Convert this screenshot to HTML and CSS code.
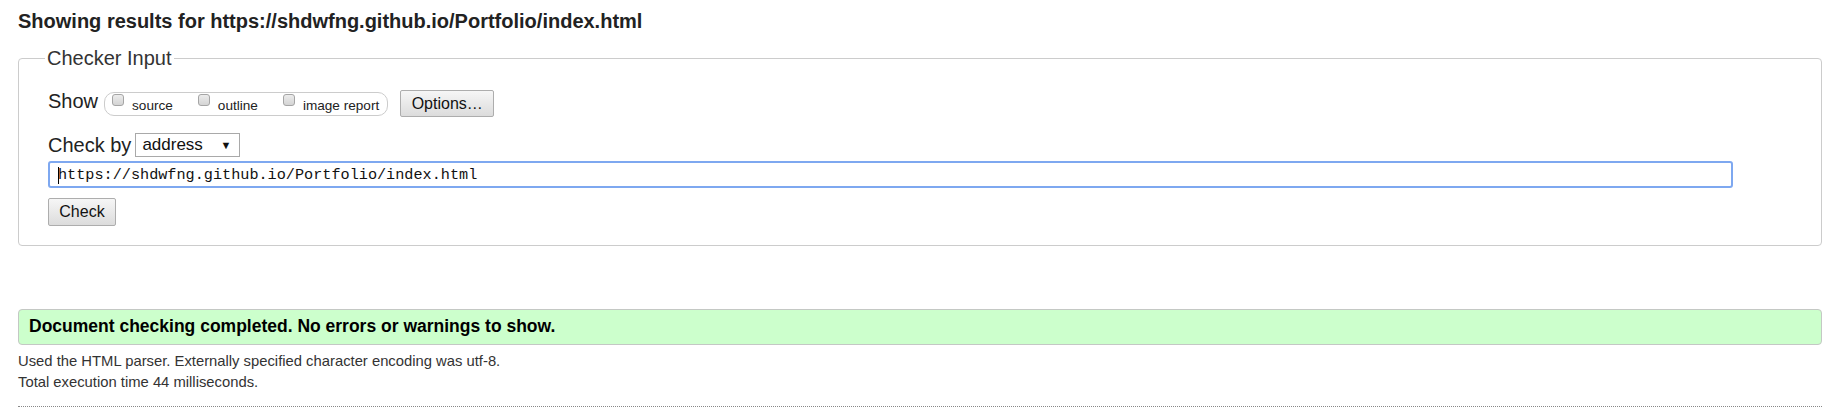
FILE: index.html
```html
<!DOCTYPE html>
<html lang="en">
<head>
<meta charset="utf-8">
<title>Showing results for https://shdwfng.github.io/Portfolio/index.html</title>
<link rel="stylesheet" href="styles.css">
</head>
<body>
<div class="page">
  <h2 class="title">Showing results for https://shdwfng.github.io/Portfolio/index.html</h2>
  <form class="checker">
    <fieldset class="panel">
      <legend class="panel-legend">Checker Input</legend>
      <div class="row row-show">
        <span class="label">Show</span>
        <fieldset class="pill">
          <label class="opt"><input type="checkbox" class="cb"><span class="opt-text">source</span></label>
          <label class="opt"><input type="checkbox" class="cb"><span class="opt-text">outline</span></label>
          <label class="opt"><input type="checkbox" class="cb"><span class="opt-text">image report</span></label>
        </fieldset>
        <button type="button" class="btn btn-options">Options…</button>
      </div>
      <div class="row row-by">
        <span class="label">Check by</span>
        <div class="select"><span class="select-text">address</span><span class="select-arrow">▼</span></div>
      </div>
      <div class="url"><span class="caret"></span>https://shdwfng.github.io/Portfolio/index.html</div>
      <div class="row row-check">
        <button type="button" class="btn btn-check">Check</button>
      </div>
    </fieldset>
  </form>
  <div class="success">Document checking completed. No errors or warnings to show.</div>
  <p class="info">Used the HTML parser. Externally specified character encoding was utf-8.</p>
  <p class="info">Total execution time 44 milliseconds.</p>
  <hr class="rule">
</div>
</body>
</html>
```
FILE: styles.css
```css
html, body {
  margin: 0;
  padding: 0;
  background: #fff;
}
.page {
  padding: 0 21px 0 18px;
  font-family: "Liberation Sans", Arial, sans-serif;
  color: #222;
}
.title {
  margin: 10px 0 0 0;
  font-size: 20px;
  line-height: 23px;
  font-weight: bold;
  color: #222;
}
.checker {
  margin: 14px 0 0 0;
}
.panel {
  margin: 0;
  border: 1px solid #cccccc;
  border-radius: 4px;
  padding: 20px 10px 19px 29px;
  min-width: 0;
}
.panel-legend {
  margin-left: -3px;
  padding: 0 2px;
  font-size: 20px;
  line-height: 23px;
  color: #333;
}
.row {
  display: flex;
  align-items: center;
}
.row-show {
  height: 27px;
}
.label {
  font-size: 20px;
  line-height: 23px;
  color: #222;
}
.row-show .label {
  margin-right: 6px;
  margin-top: -4px;
}
.pill {
  margin: 0;
  display: flex;
  align-items: flex-start;
  height: 22px;
  padding: 0 8px 0 7px;
  border: 1px solid #cccccc;
  border-radius: 10px;
  box-sizing: content-box;
  align-self: flex-start;
  margin-top: 2px;
}
.opt {
  display: flex;
  align-items: flex-start;
  margin-left: 25px;
}
.opt:first-child {
  margin-left: 0;
}
.cb {
  appearance: none;
  -webkit-appearance: none;
  width: 12px;
  height: 12px;
  margin: 1px 8px 0 0;
  border: 1px solid #a5a5a5;
  border-radius: 3px;
  background: linear-gradient(#ececec, #d4d4d4);
  box-sizing: border-box;
}
.opt-text {
  font-size: 13.6px;
  line-height: 16px;
  margin-top: 5px;
  color: #222;
}
.btn {
  font-family: "Liberation Sans", Arial, sans-serif;
  font-size: 16px;
  color: #111;
  border: 1px solid #adadad;
  border-radius: 2px;
  background: linear-gradient(#f6f6f6, #dcdcdc);
  padding: 0;
  box-sizing: border-box;
}
.btn-options {
  margin-left: 12px;
  width: 94px;
  height: 27px;
  align-self: flex-start;
}
.row-by {
  margin-top: 16px;
  height: 24px;
}
.row-by .label {
  margin-right: 4px;
}
.select {
  display: flex;
  align-items: center;
  justify-content: space-between;
  width: 105px;
  height: 24px;
  box-sizing: border-box;
  border: 1px solid #a9a9a9;
  padding: 0 8px 0 6px;
  background: #fff;
}
.select-text {
  font-size: 17px;
  color: #111;
}
.select-arrow {
  font-size: 11px;
  color: #111;
}
.url {
  margin-top: 4px;
  width: 1685px;
  height: 27px;
  box-sizing: border-box;
  border: 2px solid #7ea8f0;
  border-radius: 3px;
  padding: 0 0 0 8px;
  display: flex;
  align-items: center;
  font-family: "Liberation Mono", "DejaVu Sans Mono", monospace;
  font-size: 15.2px;
  color: #111;
  position: relative;
}
.caret {
  position: absolute;
  left: 8px;
  top: 4px;
  width: 1px;
  height: 17px;
  background: #000;
}
.row-check {
  margin-top: 10px;
}
.btn-check {
  width: 68px;
  height: 28px;
}
.success {
  margin-top: 63px;
  border: 1px solid #c4c8c4;
  border-radius: 4px;
  background: #ccffcc;
  padding: 6px 10px 8px 10px;
  font-size: 17.5px;
  line-height: 20px;
  font-weight: bold;
  color: #000;
}
.info {
  margin: 4px 0 0 0;
  font-size: 14.8px;
  line-height: 17px;
  color: #333;
}
.success + .info {
  margin-top: 8px;
}
.rule {
  margin: 15px 0 0 0;
  border: 0;
  border-top: 1px dotted #888;
  height: 0;
}
```
